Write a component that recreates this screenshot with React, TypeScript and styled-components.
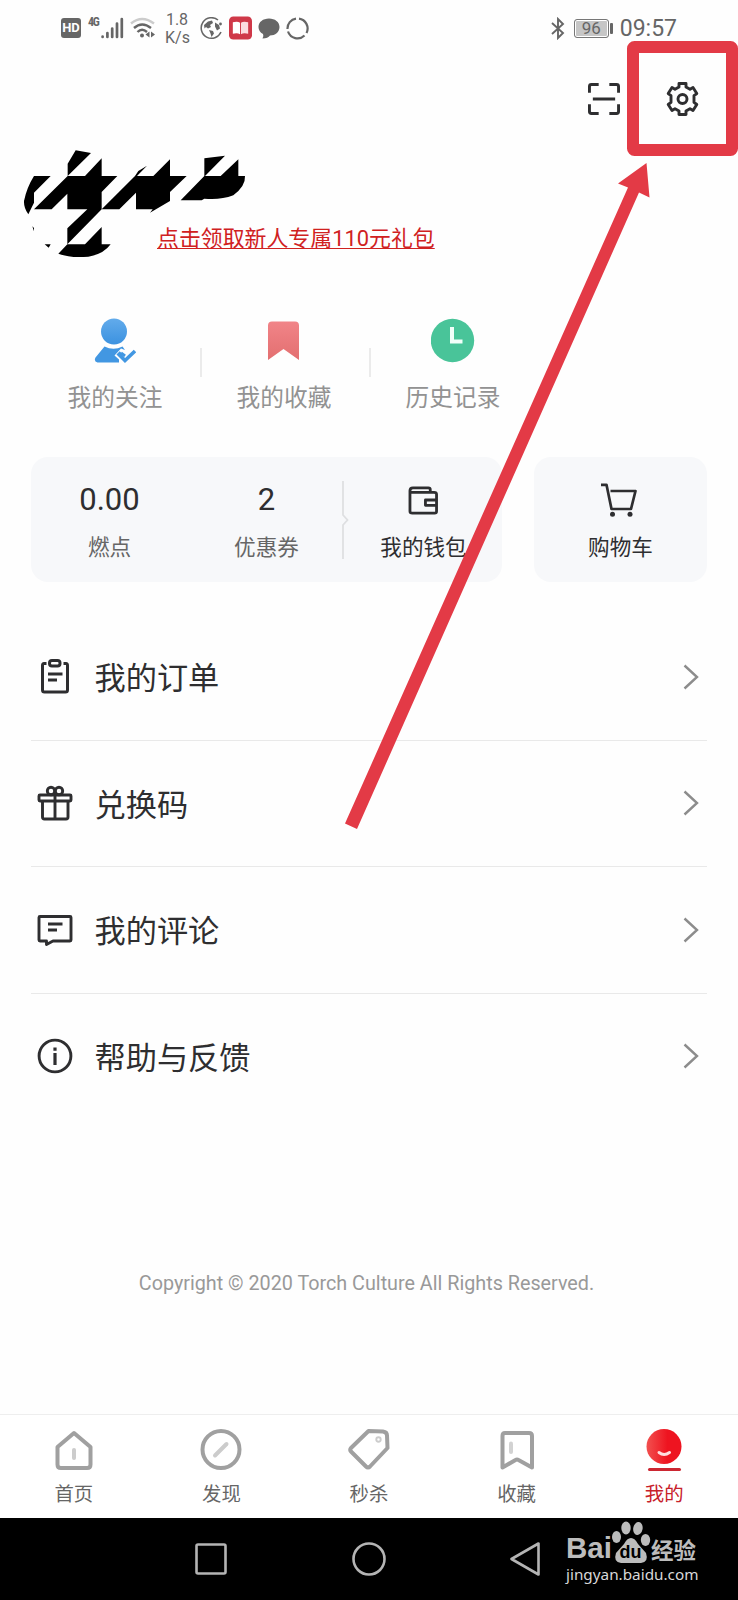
import React from 'react';
import styled, { createGlobalStyle } from 'styled-components';

const INK = '#2e2e30';
const STATUS = '#666';
const MARK = '#e33a46';

const GlobalStyle = createGlobalStyle`
  body {
    margin: 0;
    background: #fefefe;
    font-family: Roboto, 'Noto Sans CJK SC', sans-serif;
    color: ${INK};
  }
  svg { display: block; flex: none; }
`;

const Screen = styled.div`
  position: relative;
  width: 738px;
  height: 1600px;
  overflow: hidden;
  display: flex;
  flex-direction: column;
`;

/* ---------- status bar ---------- */
const StatusBar = styled.header`
  height: 56px;
  flex: none;
  box-sizing: border-box;
  padding: 0 61px;
  display: flex;
  justify-content: space-between;
  color: ${STATUS};
`;
const StatusGroup = styled.div<{ $gap?: number }>`
  display: flex;
  align-items: center;
  gap: ${p => p.$gap ?? 6}px;
`;
const HdBadge = styled.span`
  width: 20px;
  height: 20px;
  border-radius: 3px;
  background: ${STATUS};
  color: #fff;
  font: 700 13px/20px Roboto, sans-serif;
  text-align: center;
`;
const NetworkType = styled.span`
  font: 700 12px/12px 'Roboto Condensed', Roboto, sans-serif;
  align-self: flex-start;
  margin: 16px -5px 0 1px;
  width: 12px;
  white-space: nowrap;
  letter-spacing: -1.2px;
`;
const Speed = styled.span`
  width: 24px;
  margin: 1px 5px 0 4px;
  font-size: 16px;
  line-height: 18px;
  text-align: center;
`;
const Battery = styled.span`
  position: relative;
  box-sizing: border-box;
  width: 35px;
  height: 19px;
  border: 1.5px solid #777;
  border-radius: 3px;
  background: #c6c6c6;
  box-shadow: inset 0 0 0 1px #fff;
  font-size: 17px;
  line-height: 17px;
  text-align: center;
  &::after {
    content: '';
    position: absolute;
    right: -5px;
    top: 3px;
    width: 2.5px;
    height: 11px;
    border-radius: 1px;
    background: ${STATUS};
  }
`;
const Clock = styled.span`
  font-size: 23px;
  line-height: 28px;
  margin-left: 2px;
  padding-top: 2px;
`;

/* ---------- header and profile ---------- */
const Header = styled.div`
  height: 86px;
  flex: none;
  display: flex;
  justify-content: flex-end;
  align-items: center;
  gap: 46px;
  padding-right: 39px;
`;
const Profile = styled.section`
  position: relative;
  height: 158px;
  flex: none;
  box-sizing: border-box;
  padding: 81px 0 0 157px;
`;
const Scribble = styled.svg`
  position: absolute;
  left: 10px;
  top: -1.5px;
`;
const GiftLink = styled.a`
  display: inline-block;
  font-size: 21.9px;
  line-height: 32px;
  color: #d0211f;
  text-decoration: underline;
  text-decoration-thickness: 1px;
  text-underline-offset: 2px;
  white-space: nowrap;
`;

/* ---------- shortcuts ---------- */
const Shortcuts = styled.nav`
  display: flex;
  flex: none;
  height: 157px;
  padding-left: 30.5px;
`;
const Shortcut = styled.div`
  position: relative;
  width: 169px;
  display: flex;
  flex-direction: column;
  align-items: center;
  padding-top: 18px;
  font-size: 23.7px;
  line-height: 32px;
  color: #929292;
  gap: 18px;
  & + &::before {
    content: '';
    position: absolute;
    left: 0;
    top: 48px;
    width: 2px;
    height: 29px;
    background: #ebebeb;
  }
`;

/* ---------- wallet cards ---------- */
const Cards = styled.section`
  display: flex;
  justify-content: space-between;
  flex: none;
  height: 125px;
  padding: 0 31px;
`;
const Card = styled.div<{ $width: number }>`
  width: ${p => p.$width}px;
  border-radius: 17px;
  background: #f7f8fa;
  display: flex;
  position: relative;
`;
const Cell = styled.div<{ $muted?: boolean }>`
  flex: 1;
  display: flex;
  flex-direction: column;
  align-items: center;
  font-size: 21.6px;
  line-height: 30px;
  color: ${p => (p.$muted ? '#666' : INK)};
`;
const Value = styled.div`
  height: 76px;
  padding-top: 10px;
  box-sizing: border-box;
  display: flex;
  align-items: center;
  font-size: 31px;
  color: ${INK};
`;
const CardDivider = styled.svg`
  position: absolute;
  left: 311px;
  top: 24px;
`;

/* ---------- menu ---------- */
const Menu = styled.ul`
  list-style: none;
  margin: 32px 31px 0;
  padding: 0;
  flex: none;
`;
const MenuRow = styled.li`
  height: 126.5px;
  box-sizing: border-box;
  display: flex;
  align-items: center;
  padding: 0 8px 0 6px;
  border-bottom: 1px solid #e9e9e9;
  font-size: 31.2px;
  line-height: 44px;
  &:last-child { border-bottom-color: transparent; }
`;
const MenuLabel = styled.span`
  flex: 1;
  margin-left: 21.5px;
  padding-top: 5px;
`;
const Copyright = styled.p`
  margin: 0;
  padding: 150px 5px 0 0;
  flex: 1;
  text-align: center;
  font-size: 19.75px;
  line-height: 28px;
  color: #999;
`;

/* ---------- bottom bars ---------- */
const TabBar = styled.nav`
  height: 104px;
  flex: none;
  box-sizing: border-box;
  border-top: 1px solid #eee;
  background: #fff;
  display: flex;
`;
const Tab = styled.div<{ $active?: boolean }>`
  flex: 1;
  display: flex;
  flex-direction: column;
  align-items: center;
  padding-top: 12px;
  gap: 10px;
  font-size: 19.4px;
  line-height: 28px;
  color: ${p => (p.$active ? '#c8202a' : '#666')};
`;
const SystemBar = styled.footer`
  position: relative;
  height: 82px;
  flex: none;
  background: #000;
  display: flex;
  justify-content: center;
  align-items: center;
  gap: 123px;
`;
const Watermark = styled.div`
  position: absolute;
  left: 566px;
  top: 2px;
  width: 134px;
  color: #bcbcbc;
`;
const Brand = styled.div`
  display: flex;
  align-items: flex-end;
  height: 44px;
`;
const BrandLatin = styled.span`
  width: 46px;
  font: 700 29.5px/32px 'Liberation Sans', sans-serif;
`;
const BrandHan = styled.span`
  font: 700 22.5px/30px 'Noto Sans CJK SC', sans-serif;
  white-space: nowrap;
`;
const Site = styled.div`
  font: 400 15.3px/20px 'Noto Sans', sans-serif;
  color: #d8d8d8;
`;
const Annotation = styled.svg`
  position: absolute;
  left: 0;
  top: 0;
  pointer-events: none;
`;

/* ---------- icons ---------- */
const line = (width = 3) => ({
  fill: 'none',
  stroke: INK,
  strokeWidth: width,
  strokeLinejoin: 'round' as const,
});

const Signal = () => (
  <svg width="23" height="22" viewBox="0 0 23 22" stroke={STATUS} strokeWidth="2.7" strokeLinecap="round">
    <path d="M1.6 19.6v.3M6.4 16v4M11.2 11.5V20M16 6.5V20M20.8 2v18" />
  </svg>
);
const Wifi = () => (
  <svg width="25" height="22" viewBox="0 0 25 22" fill="none" stroke={STATUS} strokeWidth="2.4">
    <path d="M1 6.5Q12 -2.5 24 6.5" stroke="#ccc" />
    <path d="M4 11Q12 4 21 11M7.5 15Q12 10.5 17 15" />
    <circle cx="12" cy="18.5" r="2" fill={STATUS} stroke="none" />
    <path d="M19.5 14.5v6l-4-3zM21 14.5v6l4-3z" fill={STATUS} stroke="none" />
  </svg>
);
const Globe = () => (
  <svg width="23" height="23" viewBox="0 0 23 23" fill="none" stroke={STATUS} strokeWidth="1.5">
    <path d="M18 3A10.3 10.3 0 1 0 21 15" />
    <path d="M4 8l4-3.500 4-1 1 2.500-3 2 1 2-3 1.500-2-1.500-1.500 1.500zM9 13l4 1 1 2.500-2.500 3.500-1-3.500zM15 5.500l4 2.500 1 3.500-3 2-2-4z" fill={STATUS} stroke="none" />
    <circle cx="20.5" cy="7" r="1.4" fill={STATUS} stroke="none" />
  </svg>
);
const Book = () => (
  <svg width="23" height="24" viewBox="0 0 24 24">
    <rect width="24" height="24" rx="4.5" fill="#cf3848" />
    <path d="M4 6q5-1.500 7.500.5v12Q9 17 4 18z" fill="#fff" />
    <path d="M20 6q-5-1.500-7.500.5v12Q15 17 20 18z" fill="#fbdcdf" />
  </svg>
);
const Bubble = () => (
  <svg width="22" height="21" viewBox="0 0 22 21" fill={STATUS}>
    <path d="M11 .5C17 .5 21.500 4 21.500 9S17 17.500 12 17.500Q10 20.500 4.500 20.500Q6 18 5 16Q.5 13.500.5 9C.5 4 5 .5 11 .5z" />
  </svg>
);
const Ring = () => (
  <svg width="23" height="23" viewBox="0 0 23 23" fill="none" stroke={STATUS} strokeWidth="2.2">
    <path d="M13 1.600A10 10 0 0 1 20.500 16M18.500 18.500A10 10 0 0 1 2 14.500M1.500 12A10 10 0 0 1 10 1.600" />
  </svg>
);
const Bluetooth = () => (
  <svg width="14" height="23" viewBox="0 0 14 23" fill="none" stroke={STATUS} strokeWidth="1.9">
    <path d="M1 6l11 10-5 5V2l5 5L1 17" />
  </svg>
);
const Scan = () => (
  <svg width="32" height="32" viewBox="0 0 33 33" {...line(3)} strokeLinecap="butt">
    <path d="M1.500 10V3.500q0-2 2-2H11M22 1.500h7.500q2 0 2 2V10M31.500 22v7.500q0 2-2 2H22M11 31.500H3.500q-2 0-2-2V22M5 16.500h23" />
  </svg>
);
const Gear = () => (
  <svg width="33" height="34" viewBox="0 0 33 34" {...line(2.9)}>
    <path d="M13 1.500h7V5l4 2.300 3-1.800 3.800 6-2.800 2.200v6.600l2.800 2.200-3.800 6-3-1.800-4 2.300v3.500h-7V29l-4-2.300-3 1.800-3.800-6L5 20.300v-6.600l-2.800-2.200 3.800-6 3 1.800L13 5z" />
    <circle cx="16.5" cy="17" r="4.5" />
  </svg>
);
const Follow = () => (
  <svg width="42" height="46" viewBox="0 0 42 46">
    <defs>
      <linearGradient id="follow" x2="0" y2="1">
        <stop stopColor="#62abeb" /><stop offset="1" stopColor="#3c92e0" />
      </linearGradient>
    </defs>
    <circle cx="20" cy="13.5" r="13" fill="url(#follow)" />
    <path d="M10.500 28.500q9 4.500 18 0l2.500 3.500-4-1.500-6.500 7 4.500 4v3H3.500q-4-1-2-5z" fill="#4297e2" />
    <path d="M27 34.500l-2 2 6 6L41 33" fill="none" stroke="#4297e2" strokeWidth="3.6" />
    <path d="M27 35l4 3" fill="none" stroke="#4297e2" strokeWidth="3" />
  </svg>
);
const Bookmark = () => (
  <svg width="32" height="46" viewBox="0 0 32 46">
    <defs>
      <linearGradient id="bookmark" x2="0" y2="1">
        <stop stopColor="#f18488" /><stop offset="1" stopColor="#e36f70" />
      </linearGradient>
    </defs>
    <path d="M4 3.500h23q4 0 4 4V42L15.500 31 0 42V7.500q0-4 4-4z" fill="url(#bookmark)" />
  </svg>
);
const History = () => (
  <svg width="44" height="46" viewBox="0 0 44 46">
    <circle cx="21.5" cy="22.5" r="21.7" fill="#49c499" />
    <path d="M21 9v14.500H31.500" fill="none" stroke="#f1fff9" strokeWidth="4" />
  </svg>
);
const Wallet = () => (
  <svg width="31" height="29" viewBox="0 0 32 30" {...line(2.9)}>
    <path d="M2 8V5q0-3 3-3h16q2 0 2 2v3M2 6.500h25q2.500 0 2.500 2v17.500q0 2-2 2h-23q-2.500 0-2.500-2V5M30 14.500H18V20h12" />
  </svg>
);
const Cart = () => (
  <svg width="39" height="34" viewBox="0 0 39 34" {...line(2.7)}>
    <path d="M0 1.800h5.500L10.500 26H30L34.500 8H9.500" />
    <circle cx="11.5" cy="31.2" r="2.5" fill={INK} stroke="none" />
    <circle cx="29" cy="31.2" r="2.5" fill={INK} stroke="none" />
  </svg>
);
const Order = () => (
  <svg width="36" height="36" viewBox="0 0 36 36" {...line(3)}>
    <path d="M9.500 4.500H7Q5.500 4.500 5.500 6.500V31q0 2 2 2h21q2 0 2-2V6.500q0-2-1.500-2h-2.500M11 15h14.500M11 21h9" />
    <rect x="12.5" y="1.5" width="10.5" height="5.5" rx="2.5" />
  </svg>
);
const Gift = () => (
  <svg width="36" height="36" viewBox="0 0 36 36" {...line(2.9)}>
    <rect x="2" y="10" width="32" height="6" rx="1" />
    <path d="M5.500 16v16q0 2 2 2h21.500q2 0 2-2V16M18 7v27" />
    <circle cx="14" cy="6" r="3.7" /><circle cx="22" cy="6" r="3.7" />
  </svg>
);
const Comment = () => (
  <svg width="36" height="36" viewBox="0 0 36 36" {...line(2.9)}>
    <path d="M3 4.500h30q1 0 1 1V28q0 1-1 1H16l-6.500 3.500V29H3q-1 0-1-1V5.500q0-1 1-1zM11 12h14.500M11 18h9" />
  </svg>
);
const Info = () => (
  <svg width="36" height="36" viewBox="0 0 36 36" {...line(2.9)}>
    <circle cx="18" cy="18" r="15.9" />
    <path d="M18 9.500v3.200M18 15V27" strokeWidth="3.2" />
  </svg>
);
const Chevron = () => (
  <svg width="17" height="26" viewBox="0 0 17 26" fill="none" stroke="#8c8c8c" strokeWidth="2.4">
    <path d="M2.500 1.500L15 13 2.500 24.500" />
  </svg>
);

const GREY = '#a0a0a0';
const TabIcon = styled.svg.attrs({
  width: 44, height: 44, viewBox: '0 0 44 44', fill: 'none', stroke: GREY,
  strokeWidth: 4, strokeLinejoin: 'round', strokeLinecap: 'round',
})``;
const HomeIcon = () => (
  <TabIcon>
    <path d="M5.500 20L22 6l16.500 14V37.500q0 3.500-3.500 3.500H9Q5.500 41 5.500 37.500z" />
    <path d="M22 23v8" stroke="#ccc" />
  </TabIcon>
);
const DiscoverIcon = () => (
  <TabIcon>
    <circle cx="22" cy="22.5" r="18.5" />
    <path d="M16 28.500l11.500-11.500" stroke="#ccc" />
  </TabIcon>
);
const SaleIcon = () => (
  <TabIcon>
    <path d="M21.500 4L36 4.500q4 .5 4 4L40.500 21 23 39.500q-2 2-4 0L4 24.500q-1.500-1.500 0-3.500z" />
    <circle cx="31.5" cy="12.5" r="2.2" stroke="#ccc" strokeWidth="1.9" />
  </TabIcon>
);
const SavedIcon = () => (
  <TabIcon>
    <path d="M10 6h24q3 0 3 3V40.500l-13.500-7.500q-1.500-1-3 0L7.500 40.500V9q0-3 2.500-3z" />
    <path d="M16 16.500v8.500" stroke="#d2d2d2" />
  </TabIcon>
);
const MineIcon = () => (
  <TabIcon>
    <defs>
      <linearGradient id="mine"><stop stopColor="#f2504f" /><stop offset=".6" stopColor="#ee1420" /></linearGradient>
    </defs>
    <circle cx="22" cy="19.5" r="17.5" fill="url(#mine)" stroke="none" />
    <path d="M17 25.500q5 4 10.500 0" stroke="#ffdede" strokeWidth="3" />
    <rect x="6" y="41" width="33" height="3" rx="1.5" fill="#cc2732" stroke="none" />
  </TabIcon>
);

const menu = [
  { label: '我的订单', Icon: Order },
  { label: '兑换码', Icon: Gift },
  { label: '我的评论', Icon: Comment },
  { label: '帮助与反馈', Icon: Info },
];
const tabs = [
  { label: '首页', Icon: HomeIcon },
  { label: '发现', Icon: DiscoverIcon },
  { label: '秒杀', Icon: SaleIcon },
  { label: '收藏', Icon: SavedIcon },
  { label: '我的', Icon: MineIcon, active: true },
];

export default function App() {
  return (
    <Screen>
      <GlobalStyle />
      <StatusBar>
        <StatusGroup>
          <HdBadge>HD</HdBadge>
          <NetworkType>4G</NetworkType>
          <Signal />
          <Wifi />
          <Speed>1.8 K/s</Speed>
          <Globe /><Book /><Bubble /><Ring />
        </StatusGroup>
        <StatusGroup $gap={9}>
          <Bluetooth />
          <Battery>96</Battery>
          <Clock>09:57</Clock>
        </StatusGroup>
      </StatusBar>

      <Header><Scan /><Gear /></Header>

      <Profile>
        <Scribble width="250" height="120" viewBox="0 0 750 360">
          <path d="M173 68L197 28l46 8-70 69zM173 105h52l50-53v53h47l-47 48v52L172 310v-48l60-57h-60v-47l-47 47H72z" />
          <path d="M72 105h50l-50 50v30l-17 35q-14-20-13-40 8-40 30-75zM172 310h53l50-52v52h27q-22 30-67 37-55 5-90-9z" />
          <path d="M275 205l100-100 10-15 26-16-30 31h49l50-50v50h50l-50 48v27l-60 35 8-10h-50v-50l-50 50zM512 178l71-73V52l62-8-60 61h47l53-50v50h20q2 30-35 58-40 15-87 10l-8 5zM104 310h18l-6 10zM67 256l5 5v10z" />
        </Scribble>
        <GiftLink>点击领取新人专属110元礼包</GiftLink>
      </Profile>

      <Shortcuts>
        <Shortcut><Follow />我的关注</Shortcut>
        <Shortcut><Bookmark />我的收藏</Shortcut>
        <Shortcut><History />历史记录</Shortcut>
      </Shortcuts>

      <Cards>
        <Card $width={471}>
          <Cell $muted><Value>0.00</Value>燃点</Cell>
          <Cell $muted><Value>2</Value>优惠券</Cell>
          <Cell><Value><Wallet /></Value>我的钱包</Cell>
          <CardDivider width="8" height="78" viewBox="0 0 8 78" fill="none" stroke="#dedfe1" strokeWidth="1.8">
            <path d="M1 0v34l4.500 5L1 44v34" />
          </CardDivider>
        </Card>
        <Card $width={173}>
          <Cell><Value><Cart /></Value>购物车</Cell>
        </Card>
      </Cards>

      <Menu>
        {menu.map(({ label, Icon }) => (
          <MenuRow key={label}>
            <Icon />
            <MenuLabel>{label}</MenuLabel>
            <Chevron />
          </MenuRow>
        ))}
      </Menu>

      <Copyright>Copyright © 2020 Torch Culture All Rights Reserved.</Copyright>

      <TabBar>
        {tabs.map(({ label, Icon, active }) => (
          <Tab key={label} $active={active}><Icon />{label}</Tab>
        ))}
      </TabBar>

      <SystemBar>
        <svg width="34" height="34" viewBox="0 0 34 34" fill="none" stroke="#b4b4b4" strokeWidth="2.6">
          <rect x="1.5" y="2.5" width="29" height="29" rx="1.5" />
        </svg>
        <svg width="34" height="34" viewBox="0 0 34 34" fill="none" stroke="#b4b4b4" strokeWidth="2.6">
          <circle cx="17" cy="17" r="15.5" />
        </svg>
        <svg width="34" height="34" viewBox="0 0 34 34" fill="none" stroke="#b4b4b4" strokeWidth="2.6" strokeLinejoin="round">
          <path d="M29.500 1.500v31L2.500 17z" />
        </svg>
        <Watermark>
          <Brand>
            <BrandLatin>Bai</BrandLatin>
            <svg width="39" height="44" viewBox="0 0 39 44" fill="#bcbcbc">
              <ellipse cx="4.5" cy="17" rx="4.5" ry="6" />
              <ellipse cx="14" cy="8" rx="4.7" ry="6.5" />
              <ellipse cx="26" cy="8.5" rx="4.7" ry="6.5" transform="rotate(10 26 8)" />
              <ellipse cx="33.5" cy="20" rx="4.7" ry="6" />
              <path d="M19 18Q23 18 26 24L34 33Q37 42 29 43H9Q1 42 4 33L12 24Q15 18 19 18z" />
              <text x="18.5" y="38" textAnchor="middle" fill="#000" fontFamily="Liberation Sans" fontWeight="700" fontSize="18">du</text>
            </svg>
            <BrandHan>经验</BrandHan>
          </Brand>
          <Site>jingyan.baidu.com</Site>
        </Watermark>
      </SystemBar>

      <Annotation width="738" height="840" viewBox="0 0 738 840">
        <rect x="633" y="47" width="99" height="103" rx="1.5" fill="none" stroke={MARK} strokeWidth="12" strokeLinejoin="round" />
        <path d="M345 823.500L628 187.500L618 183.500L646.500 163L649.500 197.500L639 192.500L357 829z" fill={MARK} />
      </Annotation>
    </Screen>
  );
}
